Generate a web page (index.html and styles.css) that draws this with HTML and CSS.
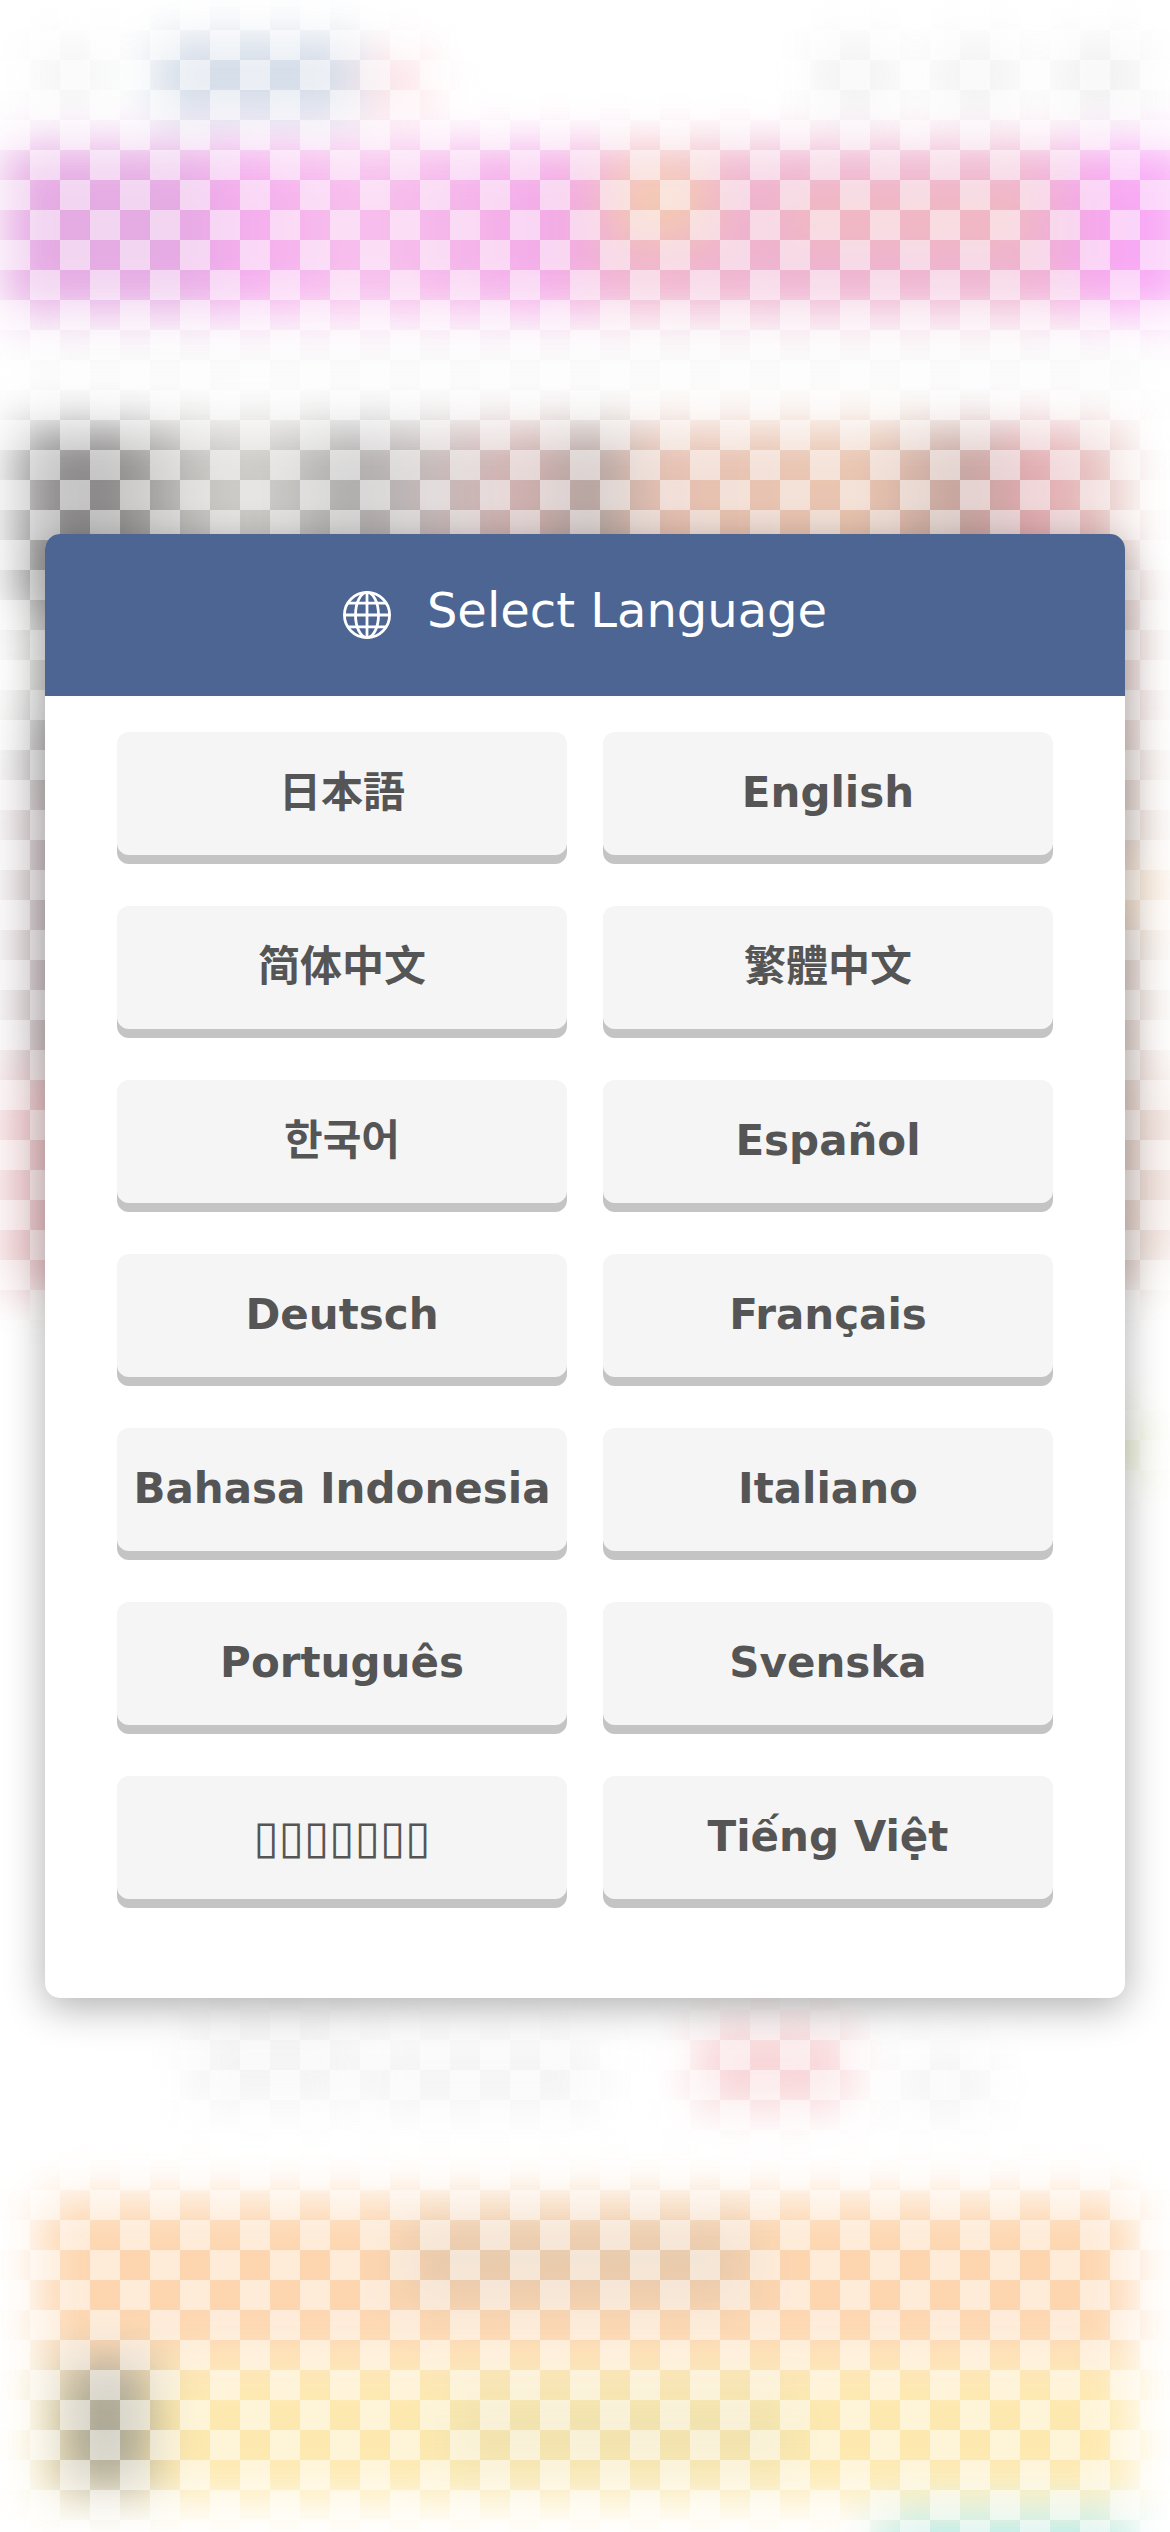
FILE: index.html
```
<!DOCTYPE html>
<html lang="en">
<head>
<meta charset="utf-8">
<meta name="viewport" content="width=device-width, initial-scale=1">
<title>Select Language</title>
<link rel="stylesheet" href="styles.css">
</head>
<body>
<div class="backdrop" aria-hidden="true">
  <svg class="backdrop-art" viewBox="0 0 1170 2532" preserveAspectRatio="none">
    <defs>
      <filter id="soft" filterUnits="userSpaceOnUse" x="-100" y="-100" width="1370" height="2732" color-interpolation-filters="sRGB"><feGaussianBlur stdDeviation="24"/></filter>
      <linearGradient id="magenta">
        <stop offset="0" stop-color="#e2a0e0"/><stop offset=".15" stop-color="#e2a0e0"/>
        <stop offset=".2" stop-color="#f4a2ec"/><stop offset=".3" stop-color="#f6b8ea"/>
        <stop offset=".46" stop-color="#f2a0e6"/><stop offset=".52" stop-color="#eeaac8"/>
        <stop offset=".68" stop-color="#eca8ca"/><stop offset=".86" stop-color="#eca8ca"/>
        <stop offset=".93" stop-color="#f79af2"/><stop offset="1" stop-color="#f8a8f6"/>
      </linearGradient>
      <linearGradient id="photo">
        <stop offset="0" stop-color="#8e8c8c"/><stop offset=".08" stop-color="#767474"/>
        <stop offset=".17" stop-color="#c4c2be"/><stop offset=".23" stop-color="#c8c6c2"/>
        <stop offset=".3" stop-color="#a09e9e"/><stop offset=".37" stop-color="#beb2b2"/>
        <stop offset=".46" stop-color="#cda6a4"/><stop offset=".52" stop-color="#a09490"/>
        <stop offset=".57" stop-color="#e2b8a8"/><stop offset=".76" stop-color="#e8bea6"/>
        <stop offset=".85" stop-color="#b89690"/><stop offset=".92" stop-color="#e2a0a8"/>
        <stop offset="1" stop-color="#e4ccc4"/>
      </linearGradient>
    </defs>
    <g filter="url(#soft)" opacity=".88">
      <rect x="36" y="45" width="70" height="60" fill="#f1f1f1"/>
      <rect x="154" y="38" width="204" height="78" fill="#ccd6e4"/>
      <rect x="360" y="52" width="70" height="60" fill="#fcdde3"/>
      <rect x="815" y="42" width="80" height="70" fill="#efefef"/>
      <rect x="935" y="42" width="80" height="70" fill="#efefef"/>
      <rect x="1060" y="42" width="80" height="70" fill="#ededed"/>
      <rect x="4" y="146" width="1192" height="166" fill="url(#magenta)"/>
      <rect x="610" y="165" width="100" height="75" fill="#f3c4a8"/>
      <rect x="780" y="190" width="260" height="52" fill="#efb2b8"/>
      <rect x="20" y="335" width="1130" height="50" fill="#f8f8f8"/>
      <rect x="16" y="428" width="1112" height="180" fill="url(#photo)"/>
      <rect x="26" y="600" width="80" height="140" fill="#c2c2c0"/>
      <rect x="22" y="720" width="80" height="90" fill="#a8a6a6"/>
      <rect x="18" y="790" width="80" height="290" fill="#bcaeb2"/>
      <rect x="4" y="1070" width="110" height="222" fill="#e4b8bc"/>
      <rect x="1080" y="580" width="58" height="170" fill="#d8bcb8"/>
      <rect x="1080" y="740" width="60" height="550" fill="#d2bab0"/>
      <rect x="1090" y="860" width="66" height="60" fill="#f4dcc2"/>
      <rect x="1130" y="1080" width="50" height="180" fill="#eedcd6"/>
      <rect x="1090" y="1420" width="46" height="55" fill="#e0e6b4"/>
      <rect x="190" y="2020" width="165" height="85" fill="#f2f2f2"/>
      <rect x="365" y="2040" width="235" height="70" fill="#f2f2f2"/>
      <rect x="695" y="2024" width="155" height="84" fill="#f7cfd2"/>
      <rect x="900" y="2050" width="90" height="65" fill="#f2f2f2"/>
      <rect x="40" y="2198" width="1092" height="160" fill="#fdd1a6"/>
      <rect x="405" y="2218" width="345" height="84" fill="#e6c4a2"/>
      <rect x="40" y="2364" width="1092" height="134" fill="#fde6a4"/>
      <rect x="450" y="2385" width="340" height="90" fill="#f0e0a4"/>
      <rect x="62" y="2362" width="88" height="126" fill="#a09c88"/>
      <rect x="880" y="2516" width="250" height="90" fill="#b0e8e2"/>
    </g>
  </svg>
</div>
<main class="screen">
  <section class="dialog" role="dialog" aria-labelledby="dialog-title">
    <header class="dialog-header">
      <svg class="globe" viewBox="0 0 48 48" fill="none" stroke="currentColor" stroke-width="2.8" aria-hidden="true">
        <circle cx="24" cy="24" r="22.6"/>
        <ellipse cx="24" cy="24" rx="11.5" ry="22.6"/>
        <path d="M24 1v46M1 24h46M5 12.2h38M5 35.8h38"/>
      </svg>
      <h1 class="dialog-title" id="dialog-title">Select Language</h1>
    </header>
    <div class="languages">
      <button class="language" type="button" lang="ja">日本語</button>
      <button class="language" type="button" lang="en">English</button>
      <button class="language" type="button" lang="zh-Hans">简体中文</button>
      <button class="language" type="button" lang="zh-Hant">繁體中文</button>
      <button class="language" type="button" lang="ko">한국어</button>
      <button class="language" type="button" lang="es">Español</button>
      <button class="language" type="button" lang="de">Deutsch</button>
      <button class="language" type="button" lang="fr">Français</button>
      <button class="language" type="button" lang="id">Bahasa Indonesia</button>
      <button class="language" type="button" lang="it">Italiano</button>
      <button class="language" type="button" lang="pt">Português</button>
      <button class="language" type="button" lang="sv">Svenska</button>
      <button class="language language-boxes" type="button" lang="th">▯▯▯▯▯▯▯</button>
      <button class="language" type="button" lang="vi">Tiếng Việt</button>
    </div>
  </section>
</main>
</body>
</html>
```
FILE: styles.css
```
*,
*::before,
*::after {
  box-sizing: border-box;
}

body {
  margin: 0;
  position: relative;
  background: #fff;
  font-family: "DejaVu Sans", "Noto Sans CJK JP", sans-serif;
}

/* Softened page content behind the dialog, under a checkerboard veil */
.backdrop {
  position: absolute;
  inset: 0;
  overflow: hidden;
}

.backdrop-art {
  display: block;
  width: 100%;
  height: 100%;
}

.backdrop::after {
  content: "";
  position: absolute;
  inset: 0;
  background: repeating-conic-gradient(transparent 0 25%, rgba(255, 255, 255, 0.5) 0 50%) 0 0 / 60px 60px;
}

.screen {
  position: relative;
  display: flex;
  align-items: center;
  min-height: 100vh;
  padding: 45px;
}

.dialog {
  flex: 1;
  min-width: 0;
  overflow: hidden;
  border-radius: 15px;
  background: #fff;
  box-shadow: 0 9px 40px rgba(0, 0, 0, 0.32);
}

.dialog-header {
  display: flex;
  align-items: center;
  justify-content: center;
  gap: 36px;
  min-height: 162px;
  padding: 0 24px;
  background: #4c6593;
  color: #fff;
}

.globe {
  flex: none;
  width: 48px;
  height: 48px;
}

.dialog-title {
  margin: 0;
  padding-bottom: 10px;
  font-size: 48px;
  font-weight: 400;
  line-height: 60px;
}

.languages {
  display: grid;
  grid-template-columns: 1fr 1fr;
  gap: 42px 36px;
  padding: 36px 72px 90px;
}

.language {
  min-width: 0;
  height: 132px;
  padding: 0 0 10px;
  border: 0;
  border-radius: 12px;
  background: #f5f5f5;
  box-shadow: inset 0 -9px #c4c4c4;
  color: #555;
  font: bold 42px/60px "DejaVu Sans", "Noto Sans CJK JP", sans-serif;
  cursor: pointer;
}

.language:lang(zh-Hans) {
  font-family: "DejaVu Sans", "Noto Sans CJK SC", sans-serif;
}

.language:lang(zh-Hant) {
  font-family: "DejaVu Sans", "Noto Sans CJK TC", sans-serif;
}

.language:lang(ko) {
  font-family: "DejaVu Sans", "Noto Sans CJK KR", sans-serif;
}

.language-boxes {
  font-size: 46px;
  font-weight: 400;
}
```
